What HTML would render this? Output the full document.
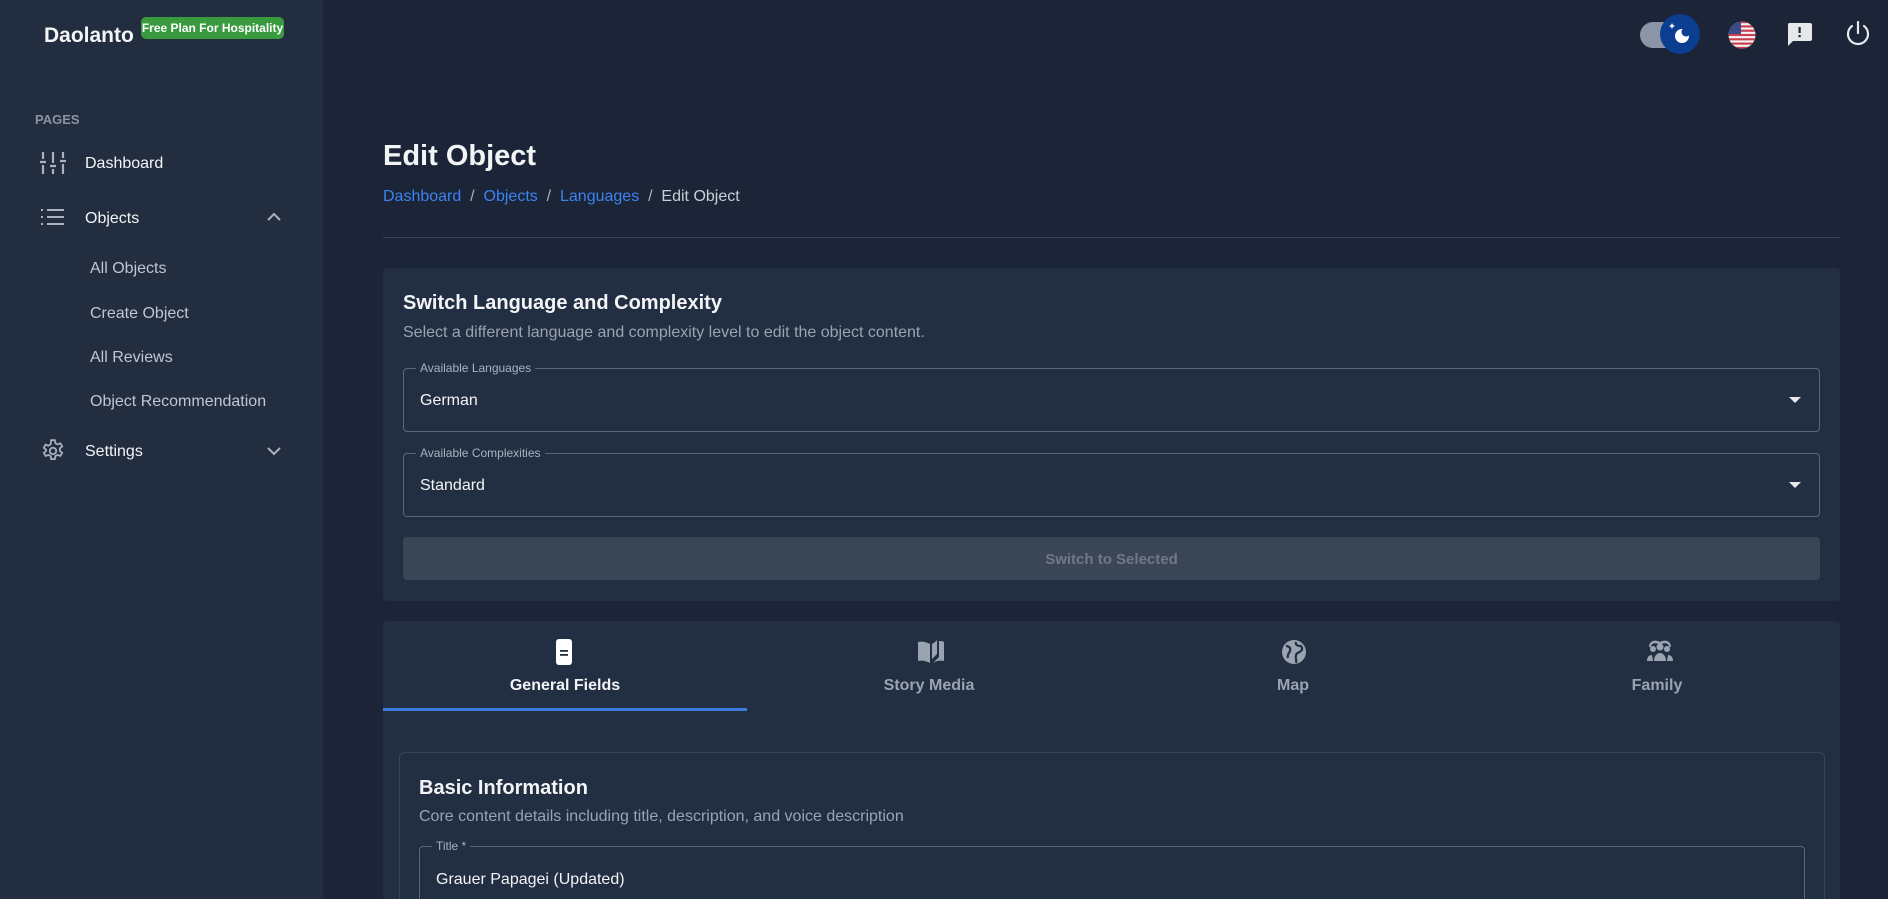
<!DOCTYPE html>
<html><head><meta charset="utf-8"><style>
*{box-sizing:border-box;margin:0;padding:0}
html{width:1888px;height:899px;overflow:hidden}
body{width:1888px;height:899px;overflow:hidden;background:#1b2537;font-family:"Liberation Sans",sans-serif;color:#e5e7eb;position:relative}
.sb{position:absolute;left:0;top:0;width:323px;height:899px;background:#222d40}
.a{position:absolute;white-space:nowrap}
.card{position:absolute;background:#222e42;border-radius:4px}
.sel{position:absolute;left:20px;right:20px;border:1px solid #5b6577;border-radius:4px}
.sel .lb{position:absolute;left:12px;top:-8px;background:#222e42;padding:0 4px;font-size:12px;color:#aab2bf}
.sel .v{position:absolute;left:16px;top:23px;font-size:16px;color:#f3f4f6}
.sel .ar{position:absolute;right:18px;top:28px;width:0;height:0;border-left:6px solid transparent;border-right:6px solid transparent;border-top:6px solid #e5e7eb}
.tab{position:absolute;top:0;width:364px;height:90px;text-align:center}
.tab .t{position:absolute;top:56px;width:100%;font-size:16px;font-weight:bold;color:#9aa3b0}
.tab svg{position:absolute;top:18px;left:170px}
</style></head><body>
<div class="sb">
<div class="a" style="left:44px;top:24px;font-size:21px;font-weight:bold;color:#f3f4f6">Daolanto</div>
<div class="a" style="left:141px;top:17px;width:143px;height:22px;background:#3a9a3f;border-radius:5px;font-size:12px;font-weight:bold;color:#fff;text-align:center;line-height:22px">Free Plan For Hospitality</div>
<div class="a" style="left:35px;top:112px;font-size:13px;font-weight:bold;color:#8a93a1">PAGES</div>
<svg class="a" style="left:40px;top:151px" width="26" height="24" viewBox="0 0 26 24" stroke="#aab2bf" stroke-width="2.2" fill="none"><path d="M3 1v7M0 11h6M3 14v9M13 1v11M10 15h6M13 18v5M23 1v6M20 10h6M23 13v10"/></svg>
<div class="a" style="left:85px;top:155px;font-size:16px;color:#f3f4f6">Dashboard</div>
<svg class="a" style="left:41px;top:208px" width="23" height="18" viewBox="0 0 23 18" stroke="#aab2bf" stroke-width="2" fill="none"><path d="M0 2h2M6 2h17M0 9h2M6 9h17M0 16h2M6 16h17"/></svg>
<div class="a" style="left:85px;top:210px;font-size:16px;color:#f3f4f6">Objects</div>
<svg class="a" style="left:267px;top:212px" width="14" height="9" viewBox="0 0 14 9" stroke="#aab2bf" stroke-width="2" fill="none"><path d="M1 8l6-6 6 6"/></svg>
<div class="a" style="left:90px;top:260px;font-size:16px;color:#bfc6d0">All Objects</div>
<div class="a" style="left:90px;top:305px;font-size:16px;color:#bfc6d0">Create Object</div>
<div class="a" style="left:90px;top:349px;font-size:16px;color:#bfc6d0">All Reviews</div>
<div class="a" style="left:90px;top:393px;font-size:16px;color:#bfc6d0">Object Recommendation</div>
<svg class="a" style="left:40px;top:438px" width="26" height="26" viewBox="0 0 24 24" stroke="#aab2bf" stroke-width="1.6" fill="none"><circle cx="12" cy="12" r="3"/><path d="M10.3 2h3.4l.5 2.8 2 1.1 2.6-1 1.7 2.9-2.2 1.8v2.3l2.2 1.8-1.7 2.9-2.6-1-2 1.1-.5 2.8h-3.4l-.5-2.8-2-1.1-2.6 1-1.7-2.9 2.2-1.8V10.8L3.5 9l1.7-2.9 2.6 1 2-1.1z"/></svg>
<div class="a" style="left:85px;top:443px;font-size:16px;color:#f3f4f6">Settings</div>
<svg class="a" style="left:267px;top:447px" width="14" height="9" viewBox="0 0 14 9" stroke="#aab2bf" stroke-width="2" fill="none"><path d="M1 1l6 6 6-6"/></svg>
</div>
<div class="a" style="left:1640px;top:22px;width:44px;height:26px;border-radius:13px;background:#8a96a6"></div>
<div class="a" style="left:1660px;top:14px;width:40px;height:40px;border-radius:50%;background:#0b3d91"></div>
<svg class="a" style="left:1667px;top:21px" width="26" height="26" viewBox="0 0 26 26"><path d="M5 2l1 2 2 1-2 1-1 2-1-2-2-1 2-1z" fill="#fff"/><circle cx="15" cy="15" r="7" fill="#fff"/><circle cx="19" cy="11" r="4.5" fill="#0b3d91"/></svg>
<svg class="a" style="left:1728px;top:21px" width="28" height="28" viewBox="0 0 28 28"><defs><clipPath id="c"><circle cx="14" cy="14" r="13.5"/></clipPath></defs><g clip-path="url(#c)"><rect width="28" height="28" fill="#f5f5f5"/><g fill="#c84050"><rect y="0" width="28" height="2.2"/><rect y="4.3" width="28" height="2.2"/><rect y="8.6" width="28" height="2.2"/><rect y="12.9" width="28" height="2.2"/><rect y="17.2" width="28" height="2.2"/><rect y="21.5" width="28" height="2.2"/><rect y="25.8" width="28" height="2.2"/></g><rect width="13" height="13" fill="#3c4a8a"/></g></svg>
<svg class="a" style="left:1787px;top:23px" width="25" height="24" viewBox="0 0 25 24"><path d="M2 0h21a2 2 0 0 1 2 2v14a2 2 0 0 1-2 2H6l-5 5V2a2 2 0 0 1 1-2z" fill="#e5e7eb"/><rect x="11.5" y="4" width="2.2" height="6" fill="#1b2537"/><rect x="11.5" y="12" width="2.2" height="2.2" fill="#1b2537"/></svg>
<svg class="a" style="left:1845px;top:20px" width="26" height="28" viewBox="0 0 26 28" stroke="#e5e7eb" stroke-width="2.2" fill="none" stroke-linecap="round"><path d="M13 2v11"/><path d="M7 6a10 10 0 1 0 12 0"/></svg>
<div class="a" style="left:383px;top:140px;font-size:29px;font-weight:bold;color:#f3f4f6">Edit Object</div>
<div class="a" style="left:383px;top:188px;font-size:16px;color:#aab2bf"><span style="color:#3c82f0">Dashboard</span>&nbsp; / &nbsp;<span style="color:#3c82f0">Objects</span>&nbsp; / &nbsp;<span style="color:#3c82f0">Languages</span>&nbsp; / &nbsp;<span style="color:#c9cfd8">Edit Object</span></div>
<div class="a" style="left:383px;top:237px;width:1457px;height:1px;background:#3a4456"></div>
<div class="card" style="left:383px;top:268px;width:1457px;height:333px">
<div class="a" style="left:20px;top:24px;font-size:20px;font-weight:bold;color:#f3f4f6">Switch Language and Complexity</div>
<div class="a" style="left:20px;top:56px;font-size:16px;color:#9aa3b0">Select a different language and complexity level to edit the object content.</div>
<div class="sel" style="top:100px;height:64px"><span class="lb">Available Languages</span><span class="v">German</span><span class="ar"></span></div>
<div class="sel" style="top:185px;height:64px"><span class="lb">Available Complexities</span><span class="v">Standard</span><span class="ar"></span></div>
<div class="a" style="left:20px;right:20px;top:269px;height:43px;background:#3a4556;border-radius:4px;color:#6e7888;font-size:15px;font-weight:bold;text-align:center;line-height:45px">Switch to Selected</div>
</div>
<div class="card" style="left:383px;top:621px;width:1457px;height:278px;overflow:hidden;border-radius:4px 4px 0 0">
<div class="tab" style="left:0"><svg width="22" height="26" viewBox="0 0 22 26"><rect x="3" y="0" width="16" height="26" rx="3" fill="#fff"/><rect x="7" y="11" width="8" height="1.8" fill="#222e42"/><rect x="7" y="15" width="8" height="1.8" fill="#222e42"/></svg><div class="t" style="color:#f3f4f6">General Fields</div></div>
<div class="tab" style="left:364px"><svg width="28" height="24" viewBox="0 0 28 24"><path d="M1 3c4-1 8 0 12 2v19c-4-2-8-3-12-2z M15 5c2-1 3-2 5-4v14l-5 5z M22 2c2 0 3 0 5 1v19c-4-1-8 0-11 2l6-6z" fill="#9aa3b0"/></svg><div class="t">Story Media</div></div>
<div class="tab" style="left:728px"><svg width="26" height="26" viewBox="0 0 26 26"><circle cx="13" cy="13" r="12" fill="#9aa3b0"/><path d="M5 7c3 0 5 2 4 5s-3 3-2 7M15 3c-1 3 2 4 4 4s3 3 1 5-4 1-5 4 1 5 0 8" stroke="#222e42" stroke-width="2.2" fill="none"/></svg><div class="t">Map</div></div>
<div class="tab" style="left:1092px"><svg width="30" height="24" viewBox="0 0 30 24" fill="#9aa3b0"><circle cx="15" cy="8" r="3.5"/><circle cx="8" cy="10" r="3"/><circle cx="22" cy="10" r="3"/><path d="M9 22c0-5 3-8 6-8s6 3 6 8zM2 22c0-4 2-6 5-6l1 6zM28 22c0-4-2-6-5-6l-1 6zM4 8c0-6 6-8 11-5 5-3 11-1 11 5h-2c0-4-5-5-9-2-4-3-9-2-9 2z"/></svg><div class="t">Family</div></div>
<div class="a" style="left:0;top:87px;width:364px;height:3px;background:#3c7be0"></div>
<div class="a" style="left:16px;top:131px;width:1426px;height:200px;border:1px solid #3a4456;border-radius:6px">
<div class="a" style="left:19px;top:24px;font-size:20px;font-weight:bold;color:#f3f4f6">Basic Information</div>
<div class="a" style="left:19px;top:55px;font-size:16px;color:#9aa3b0">Core content details including title, description, and voice description</div>
<div class="sel" style="left:19px;right:19px;top:93px;height:70px"><span class="lb">Title *</span><span class="v" style="top:24px">Grauer Papagei (Updated)</span></div>
</div>
</div>
</body></html>
